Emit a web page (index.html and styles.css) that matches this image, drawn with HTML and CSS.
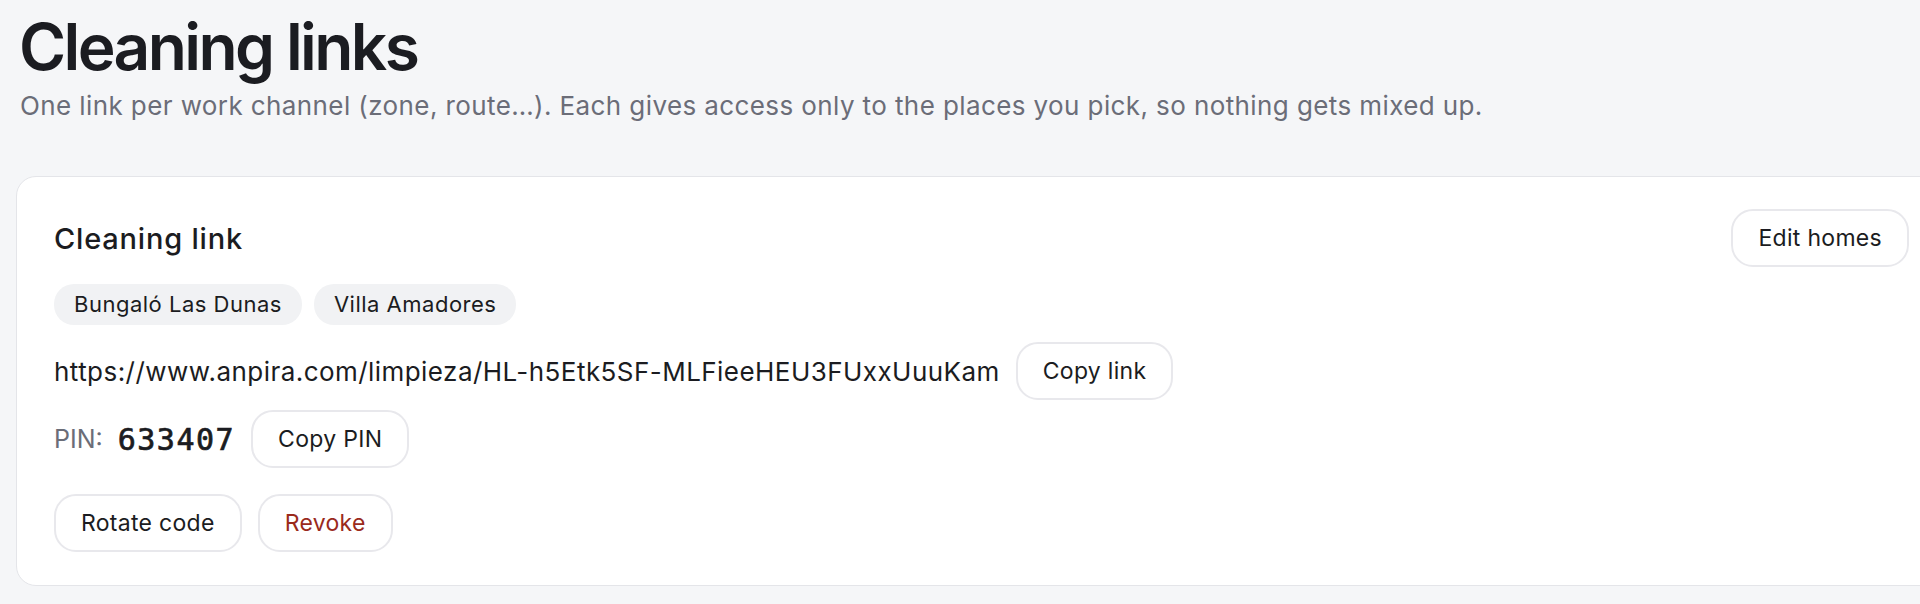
FILE: index.html
```html
<!DOCTYPE html>
<html lang="en">
<head>
    <meta charset="UTF-8">
    <meta name="viewport" content="width=device-width, initial-scale=1.0">
    <title>Cleaning links</title>
    <link rel="stylesheet" href="styles.css">
</head>
<body>
    <div class="page">
        <header class="page-head">
            <h1>Cleaning links</h1>
            <p class="lead">One link per work channel (zone, route…). Each gives access only to the places you pick, so nothing gets mixed up.</p>
        </header>

        <section class="card">
            <div class="card-head">
                <h2>Cleaning link</h2>
                <button class="btn">Edit homes</button>
            </div>

            <div class="chips">
                <span class="chip">Bungaló Las Dunas</span>
                <span class="chip">Villa Amadores</span>
            </div>

            <div class="row">
                <span class="link-url">https://www.anpira.com/limpieza/HL-h5Etk5SF-MLFieeHEU3FUxxUuuKam</span>
                <button class="btn">Copy link</button>
            </div>

            <div class="row row-pin">
                <span class="pin-label">PIN:</span>
                <span class="pin-code">633407</span>
                <button class="btn">Copy PIN</button>
            </div>

            <div class="row row-actions">
                <button class="btn">Rotate code</button>
                <button class="btn btn-danger">Revoke</button>
            </div>
        </section>
    </div>
</body>
</html>
```

FILE: styles.css
```css
html, body {
    overflow: hidden;
}
body {
    margin: 0;
    background-color: #f5f6f8;
    color: #1b1c21;
    font-family: Inter, "Noto Sans", sans-serif;
}
.page {
    padding: 15px 0 0 16px;
}
h1 {
    margin: 0 0 0 3px;
    font-size: 64px;
    line-height: 1;
    font-weight: 600;
    letter-spacing: -2.6px;
}
.lead {
    margin: 11px 0 0 4px;
    font-size: 26px;
    line-height: 32px;
    letter-spacing: 0.4px;
    color: #6b6d78;
}
.card {
    width: 1930px;
    margin-top: 54px;
    box-sizing: border-box;
    background-color: #fff;
    border: 1px solid #e4e5e9;
    border-radius: 20px;
    padding: 32px 36px 33px 37px;
}
.card-head {
    display: flex;
    align-items: center;
    justify-content: space-between;
}
h2 {
    margin: 0;
    font-size: 29px;
    font-weight: 500;
    letter-spacing: 0.8px;
}
.btn {
    font-family: inherit;
    font-size: 23px;
    letter-spacing: 0.3px;
    color: #1b1c21;
    background-color: #fff;
    border: 2px solid #e8e8ec;
    border-radius: 22px;
    height: 58px;
    padding: 0 25px;
    cursor: pointer;
}
.btn-danger {
    color: #9a2a1c;
}
.chips {
    display: flex;
    gap: 12px;
    margin-top: 17px;
}
.chip {
    background-color: #f1f2f4;
    border-radius: 20px;
    height: 41px;
    line-height: 41px;
    padding: 0 20px;
    font-size: 22px;
    letter-spacing: 0.5px;
}
.row {
    display: flex;
    align-items: center;
    gap: 16px;
    margin-top: 17px;
}
.link-url {
    font-size: 26px;
    letter-spacing: 0.45px;
}
.row-pin {
    margin-top: 10px;
}
.pin-label {
    font-size: 25px;
    color: #6b6d78;
}
.pin-code {
    font-family: "DejaVu Sans Mono", monospace;
    font-weight: 400;
    -webkit-text-stroke: 0.7px #1b1c21;
    font-size: 30px;
    letter-spacing: 1.5px;
    margin-left: -1px;
}
.row-actions {
    margin-top: 26px;
}
```
